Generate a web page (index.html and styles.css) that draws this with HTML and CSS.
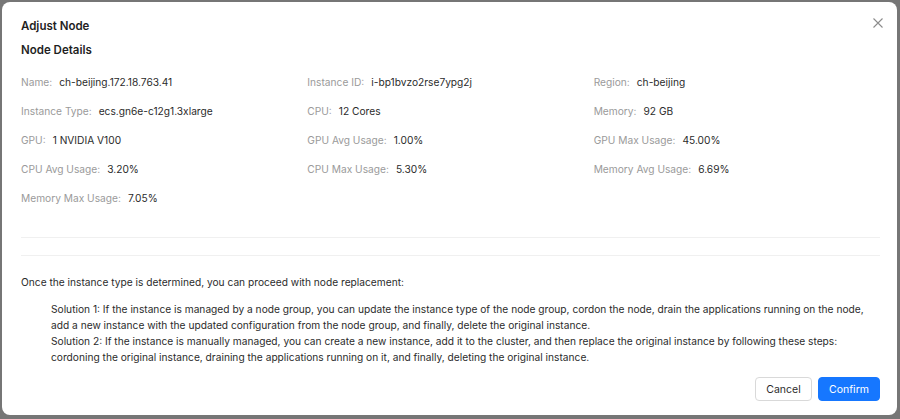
FILE: index.html
```html
<!DOCTYPE html>
<html>
<head>
<meta charset="utf-8">
<link rel="stylesheet" href="styles.css">
</head>
<body>
<div class="modal">
  <button class="close" aria-label="Close">
    <svg width="10" height="10" viewBox="0 0 10 10"><path d="M0.5 0.5L9.5 9.5M9.5 0.5L0.5 9.5" stroke="#8c8c8c" stroke-width="1.1" fill="none"/></svg>
  </button>
  <h1 class="title">Adjust Node</h1>
  <h2 class="subtitle">Node Details</h2>
  <div class="details">
    <div class="item"><span class="label">Name:</span><span class="value">ch-beijing.172.18.763.41</span></div>
    <div class="item"><span class="label">Instance ID:</span><span class="value">i-bp1bvzo2rse7ypg2j</span></div>
    <div class="item"><span class="label">Region:</span><span class="value">ch-beijing</span></div>
    <div class="item"><span class="label">Instance Type:</span><span class="value">ecs.gn6e-c12g1.3xlarge</span></div>
    <div class="item"><span class="label">CPU:</span><span class="value">12 Cores</span></div>
    <div class="item"><span class="label">Memory:</span><span class="value">92 GB</span></div>
    <div class="item"><span class="label">GPU:</span><span class="value">1 NVIDIA V100</span></div>
    <div class="item"><span class="label">GPU Avg Usage:</span><span class="value">1.00%</span></div>
    <div class="item"><span class="label">GPU Max Usage:</span><span class="value">45.00%</span></div>
    <div class="item"><span class="label">CPU Avg Usage:</span><span class="value">3.20%</span></div>
    <div class="item"><span class="label">CPU Max Usage:</span><span class="value">5.30%</span></div>
    <div class="item"><span class="label">Memory Avg Usage:</span><span class="value">6.69%</span></div>
    <div class="item"><span class="label">Memory Max Usage:</span><span class="value">7.05%</span></div>
  </div>
  <div class="divider first"></div>
  <div class="divider second"></div>
  <p class="intro">Once the instance type is determined, you can proceed with node replacement:</p>
  <div class="solutions">
    <p>Solution 1: If the instance is managed by a node group, you can update the instance type of the node group, cordon the node, drain the applications running on the node, add a new instance with the updated configuration from the node group, and finally, delete the original instance.</p>
    <p>Solution 2: If the instance is manually managed, you can create a new instance, add it to the cluster, and then replace the original instance by following these steps: cordoning the original instance, draining the applications running on it, and finally, deleting the original instance.</p>
  </div>
  <div class="footer">
    <button class="btn">Cancel</button>
    <button class="btn primary">Confirm</button>
  </div>
</div>
</body>
</html>
```
FILE: styles.css
```css
html, body {
  margin: 0;
  padding: 0;
  height: 100%;
}
body {
  background: #767676;
  font-family: Inter, "Liberation Sans", sans-serif;
  padding: 2px 3px 0 2px;
  box-sizing: border-box;
}
.modal {
  position: relative;
  background: #fff;
  border-radius: 8px;
  height: 413px;
  box-sizing: border-box;
  padding: 13px 17px 14px 19px;
  display: flex;
  flex-direction: column;
}
.close {
  position: absolute;
  top: 14px;
  right: 12px;
  width: 14px;
  height: 14px;
  padding: 0;
  border: 0;
  background: none;
  display: flex;
  align-items: center;
  justify-content: center;
}
.title,
.subtitle {
  margin: 0;
  font-size: 11.5px;
  font-weight: 600;
  line-height: 22px;
  color: #1f1f1f;
}
.subtitle {
  margin-top: 2px;
}
.details {
  margin-top: 11px;
  display: grid;
  grid-template-columns: repeat(3, 1fr);
  row-gap: 9px;
}
.item {
  font-size: 10.2px;
  line-height: 20px;
  white-space: nowrap;
}
.label {
  color: #9a9a9a;
  margin-right: 7px;
}
.value {
  color: #2b2b2b;
}
.divider {
  height: 1px;
  background: #f0f0f0;
}
.divider.first {
  margin-top: 29px;
}
.divider.second {
  margin-top: 17px;
}
.intro {
  margin: 17px 0 0;
  font-size: 10.2px;
  line-height: 18px;
  color: #2b2b2b;
}
.solutions {
  margin: 10px 0 0 30px;
  font-size: 10.2px;
  line-height: 16px;
  color: #2b2b2b;
}
.solutions p {
  margin: 0;
}
.footer {
  margin-top: auto;
  display: flex;
  justify-content: flex-end;
  gap: 6px;
}
.btn {
  height: 24px;
  padding: 0 10px;
  font-family: inherit;
  font-size: 10.5px;
  border-radius: 4px;
  border: 1px solid #d9d9d9;
  background: #fff;
  color: #2b2b2b;
  min-width: 57px;
}
.btn.primary {
  background: #1677ff;
  border-color: #1677ff;
  color: #fff;
  min-width: 62px;
}
```
